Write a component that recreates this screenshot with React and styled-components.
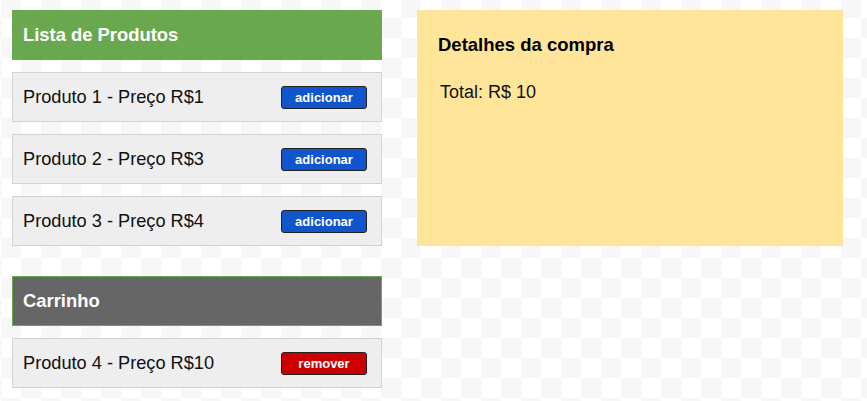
import styled, { createGlobalStyle } from 'styled-components'

const GlobalStyle = createGlobalStyle`
  html, body {
    margin: 0;
    padding: 0;
  }
  body {
    font-family: 'Liberation Sans', Arial, sans-serif;
    background-color: #ffffff;
    background-image: conic-gradient(#ffffff 25%, #f7f7f7 0 50%, #ffffff 0 75%, #f7f7f7 0);
    background-size: 40px 40px;
    background-position: 1px -2px;
    min-height: 401px;
  }
`

const produtos = [
  { id: 1, nome: 'Produto 1', preco: 1 },
  { id: 2, nome: 'Produto 2', preco: 3 },
  { id: 3, nome: 'Produto 3', preco: 4 },
]

const carrinho = [{ id: 4, nome: 'Produto 4', preco: 10 }]

export default function App() {
  const total = carrinho.reduce((acc, p) => acc + p.preco, 0)

  return (
    <>
      <GlobalStyle />
      <Page>
        <LeftColumn>
          <Section>
            <SectionHeader $bg="#6aa84f">Lista de Produtos</SectionHeader>
            {produtos.map((p) => (
              <ItemRow key={p.id}>
                <ItemLabel>
                  {p.nome} - Preço R${p.preco}
                </ItemLabel>
                <ActionButton $bg="#1155cc">adicionar</ActionButton>
              </ItemRow>
            ))}
          </Section>
          <Section>
            <SectionHeader $bg="#666666">Carrinho</SectionHeader>
            {carrinho.map((p) => (
              <ItemRow key={p.id}>
                <ItemLabel>
                  {p.nome} - Preço R${p.preco}
                </ItemLabel>
                <ActionButton $bg="#cc0000">remover</ActionButton>
              </ItemRow>
            ))}
          </Section>
        </LeftColumn>
        <DetailsPanel>
          <DetailsTitle>Detalhes da compra</DetailsTitle>
          <TotalText>Total: R$ {total}</TotalText>
        </DetailsPanel>
      </Page>
    </>
  )
}

const Page = styled.div`
  display: flex;
  align-items: flex-start;
  gap: 35px;
  padding: 10px 12px;
`

const LeftColumn = styled.div`
  width: 370px;
  display: flex;
  flex-direction: column;
  gap: 30px;
`

const Section = styled.div`
  display: flex;
  flex-direction: column;
  gap: 12px;
`

const SectionHeader = styled.div`
  box-sizing: border-box;
  height: 50px;
  display: flex;
  align-items: center;
  padding: 0 10px;
  background-color: ${(p) => p.$bg};
  border: 1px solid #6aa84f;
  color: #ffffff;
  font-size: 18.4px;
  font-weight: bold;
`

const ItemRow = styled.div`
  box-sizing: border-box;
  height: 50px;
  display: flex;
  align-items: center;
  justify-content: space-between;
  padding: 0 14px 0 10px;
  background-color: #eeeeee;
  border: 1px solid #d3d3d3;
`

const ItemLabel = styled.span`
  font-size: 18.2px;
  color: #111111;
`

const ActionButton = styled.button`
  box-sizing: border-box;
  width: 86px;
  height: 23px;
  padding: 0;
  border: 1px solid #222222;
  border-radius: 3px;
  background-color: ${(p) => p.$bg};
  color: #ffffff;
  font-family: 'Liberation Sans', Arial, sans-serif;
  font-size: 13px;
  font-weight: bold;
`

const DetailsPanel = styled.div`
  box-sizing: border-box;
  width: 426px;
  height: 236px;
  padding: 24px 21px;
  background-color: #ffe599;
`

const DetailsTitle = styled.div`
  font-size: 18.5px;
  font-weight: bold;
  color: #000000;
  margin-bottom: 26px;
`

const TotalText = styled.div`
  font-size: 18px;
  color: #111111;
  padding-left: 2px;
`
